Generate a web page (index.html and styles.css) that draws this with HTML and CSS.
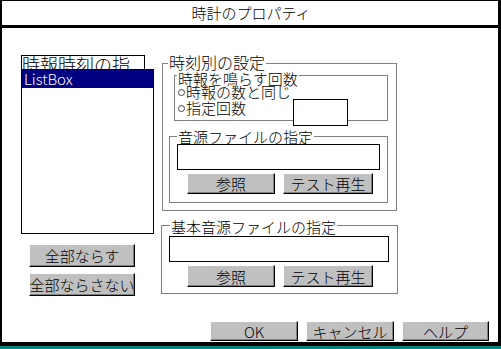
FILE: index.html
```html
<!DOCTYPE html>
<html lang="ja">
<head>
    <meta charset="UTF-8">
    <title>時計のプロパティ</title>
    <link rel="stylesheet" href="styles.css">
</head>
<body>
    <div class="window">
        <div class="titlebar">時計のプロパティ</div>

        <div class="content">
            <div class="main">
                <div class="left-col">
                    <div class="lb-head">時報時刻の指</div>
                    <div class="lb-list">
                        <div class="lb-item selected">ListBox</div>
                    </div>
                    <button class="btn btn-wide first">全部ならす</button>
                    <button class="btn btn-wide">全部ならさない</button>
                </div>

                <div class="right-col">
                    <div class="group g-time">
                        <span class="caption cap-time">時刻別の設定</span>

                        <div class="group g-count">
                            <span class="caption cap-count">時報を鳴らす回数</span>
                            <div class="radio-row">
                                <span class="radio"></span>時報の数と同じ
                            </div>
                            <div class="radio-row">
                                <span class="radio"></span>指定回数
                                <input class="field count-field" type="text">
                            </div>
                        </div>

                        <div class="group g-sound">
                            <span class="caption cap-sound">音源ファイルの指定</span>
                            <input class="field sound-field" type="text">
                            <div class="btn-row">
                                <button class="btn btn-sm">参照</button>
                                <button class="btn btn-sm btn-test">テスト再生</button>
                            </div>
                        </div>
                    </div>

                    <div class="group g-base">
                        <span class="caption cap-base">基本音源ファイルの指定</span>
                        <input class="field base-field" type="text">
                        <div class="btn-row base-row">
                            <button class="btn btn-sm btn-tall">参照</button>
                            <button class="btn btn-sm btn-tall btn-test">テスト再生</button>
                        </div>
                    </div>
                </div>
            </div>

            <div class="actions">
                <button class="btn btn-dlg">OK</button>
                <button class="btn btn-dlg">キャンセル</button>
                <button class="btn btn-dlg btn-help">ヘルプ</button>
            </div>
        </div>
    </div>
</body>
</html>
```

FILE: styles.css
```css
* {
    box-sizing: border-box;
}
body {
    margin: 0;
    width: 501px;
    height: 349px;
    background-color: #008080;
    font-family: "Noto Sans CJK JP", "Noto Sans", sans-serif;
    font-size: 15px;
    font-weight: 300;
    color: #000;
    overflow: hidden;
}
.window {
    width: 501px;
    height: 346px;
    background: #fff;
    border-style: solid;
    border-color: #000;
    border-width: 1px 3px 4px 2px;
    display: flex;
    flex-direction: column;
}
.titlebar {
    height: 27px;
    line-height: 24px;
    border-bottom: 3px solid #000;
    text-align: center;
    font-size: 15px;
    padding-left: 2px;
}
.content {
    flex: 1;
    display: flex;
    flex-direction: column;
}
.main {
    display: flex;
    align-items: flex-start;
}

/* left column: list box and its buttons */
.left-col {
    margin-left: 19px;
    margin-top: 27px;
    width: 133px;
    display: flex;
    flex-direction: column;
}
.lb-head {
    width: 124px;
    height: 14px;
    border: 1px solid #000;
    border-bottom: none;
    overflow: hidden;
    white-space: nowrap;
    font-size: 18px;
    line-height: 15px;
    padding-top: 1px;
}
.lb-list {
    height: 165px;
    border: 1px solid #000;
}
.lb-item {
    height: 18px;
    line-height: 17px;
    padding-left: 2px;
    font-size: 15px;
}
.lb-item.selected {
    background-color: #000080;
    color: #fff;
}

/* buttons */
.btn {
    font-family: inherit;
    font-size: 15px;
    font-weight: 300;
    line-height: 1;
    padding: 0;
    color: #000;
    background-color: #c0c0c0;
    border: 1px solid;
    border-color: #fff #000 #000 #fff;
    box-shadow: inset -1px -1px #808080;
    white-space: nowrap;
    display: flex;
    align-items: center;
    justify-content: center;
    overflow: visible;
}
.btn-wide {
    margin-left: 8px;
    margin-top: 6px;
    width: 106px;
    height: 23px;
}
.btn-wide.first {
    margin-top: 10px;
}
.btn-sm {
    width: 88px;
    height: 21px;
}
.btn-test {
    width: 90px;
}
.btn-tall {
    height: 22px;
}
.btn-dlg {
    width: 88px;
    height: 20px;
}
.btn-help {
    width: 87px;
}

/* group boxes */
.right-col {
    margin-left: 8px;
    margin-top: 35px;
    display: flex;
    flex-direction: column;
}
.group {
    position: relative;
    border: 1px solid #808080;
}
.caption {
    position: absolute;
    background: #fff;
    padding: 0 1px;
    line-height: 15px;
    white-space: nowrap;
}
.g-time {
    width: 235px;
    height: 148px;
    padding: 11px 0 0 11px;
}
.cap-time {
    font-size: 16px;
    top: -9px;
    left: 5px;
}
.g-count {
    width: 214px;
    height: 46px;
    padding: 8px 0 0 3px;
}
.cap-count {
    top: -5px;
    left: 2px;
}
.radio-row {
    display: flex;
    align-items: flex-start;
    line-height: 16px;
    height: 16px;
    white-space: nowrap;
}
.radio {
    width: 7px;
    height: 7px;
    margin: 5px 1px 0 0;
    border: 1px solid #404040;
    border-radius: 50%;
    background: #fff;
}
.field {
    display: block;
    margin: 0;
    padding: 0;
    border: 1px solid #000;
    background: #fff;
    font-family: inherit;
}
.count-field {
    width: 55px;
    height: 27px;
    margin-left: auto;
    margin-right: 39px;
    margin-top: -1px;
}
.g-sound {
    margin-top: 15px;
    margin-left: -5px;
    width: 219px;
    height: 67px;
    padding: 7px 0 0 7px;
}
.cap-sound {
    top: -8px;
    left: 7px;
}
.sound-field {
    width: 203px;
    height: 26px;
}
.btn-row {
    display: flex;
    gap: 8px;
    margin-top: 3px;
    padding-left: 10px;
}
.g-base {
    margin-top: 14px;
    margin-left: -1px;
    width: 237px;
    height: 69px;
    padding: 10px 0 0 7px;
}
.cap-base {
    top: -7px;
    left: 8px;
}
.base-field {
    width: 220px;
    height: 26px;
}
.base-row {
    padding-left: 18px;
}

/* dialog buttons */
.actions {
    margin-top: auto;
    display: flex;
    justify-content: flex-end;
    gap: 8px;
    padding: 0 9px 1px 0;
}
```
